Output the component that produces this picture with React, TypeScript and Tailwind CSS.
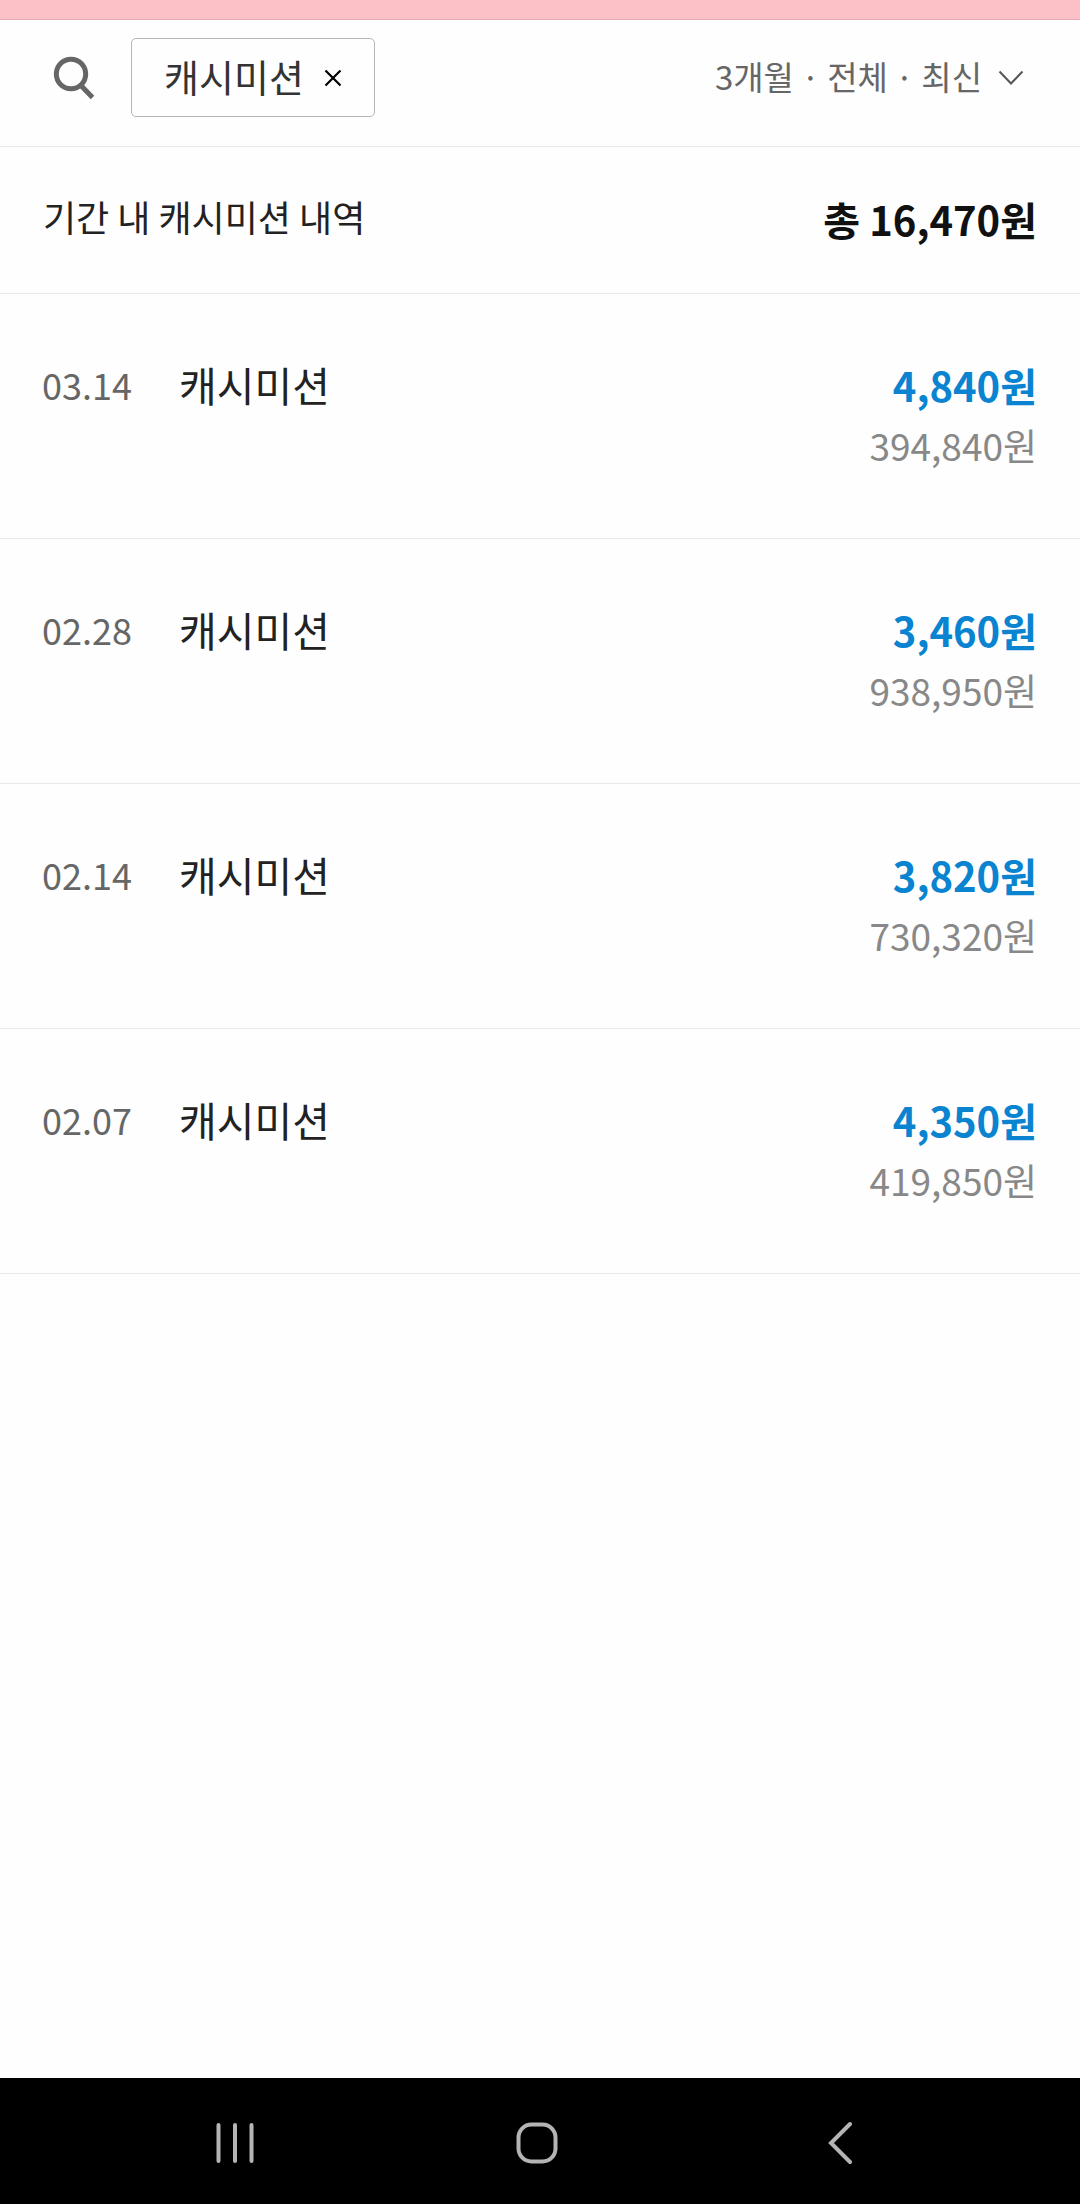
/* ── CashMissionHistory – filter bar, period total, entries ── */

import { useState } from 'react';

interface Entry {
  date: string;
  title: string;
  amount: string;
  balance: string;
}

const entries: Entry[] = [
  { date: '03.14', title: '캐시미션', amount: '4,840원', balance: '394,840원' },
  { date: '02.28', title: '캐시미션', amount: '3,460원', balance: '938,950원' },
  { date: '02.14', title: '캐시미션', amount: '3,820원', balance: '730,320원' },
  { date: '02.07', title: '캐시미션', amount: '4,350원', balance: '419,850원' },
];

function SearchIcon() {
  return (
    <svg width="42" height="44" viewBox="0 0 42 44" fill="none" stroke="#666" strokeWidth="5">
      <circle cx="18" cy="18" r="14.7" />
      <path d="M27.5 29 39.5 41.5" />
    </svg>
  );
}

function FilterBar() {
  const [keyword, setKeyword] = useState('캐시미션');

  return (
    <header className="flex h-[127px] items-start justify-between border-b border-[#e8e8e8] pt-[18px] pr-14 pl-[53px]">
      <div className="flex items-center">
        <button aria-label="검색" className="w-[78px]">
          <SearchIcon />
        </button>
        {keyword && (
          <div className="flex h-[79px] items-center gap-5 rounded-[5px] border border-[#b5b5b5] px-8 text-[38px] text-[#333]">
            <span className="pb-1">{keyword}</span>
            <button aria-label="검색어 삭제" onClick={() => setKeyword('')}>
              <svg width="18" height="18" viewBox="0 0 18 18" stroke="#000" strokeWidth="2.2">
                <path d="M1.5 1.5 16.5 16.5M16.5 1.5 1.5 16.5" />
              </svg>
            </button>
          </div>
        )}
      </div>
      <button className="flex h-[79px] items-center gap-4 text-[33px] text-[#666]">
        <span className="pb-0.5">3개월 · 전체 · 최신</span>
        <svg width="26" height="16" viewBox="0 0 26 16" fill="none" stroke="#555" strokeWidth="2">
          <path d="M1.5 1.5 13 13.5 24.5 1.5" />
        </svg>
      </button>
    </header>
  );
}

function EntryRow({ entry }: { entry: Entry }) {
  return (
    <li className="flex h-[245px] items-start border-b border-[#e8e8e8] pt-[61px] pr-[43px] pl-[42px]">
      <time className="w-[137px] text-[36px] leading-[58px] text-[#666]">{entry.date}</time>
      <p className="flex-1 text-[41px] leading-[58px] text-[#222]">{entry.title}</p>
      <div className="text-right">
        <p className="text-[40px] leading-[60px] font-bold text-[#0a84d0]">{entry.amount}</p>
        <p className="text-[37px] leading-[60px] text-[#888]">{entry.balance}</p>
      </div>
    </li>
  );
}

function SystemNav() {
  return (
    <nav className="grid h-[126px] shrink-0 grid-cols-3 items-center bg-black pt-1 pr-[90px] pl-[84px]">
      <button aria-label="최근 앱" className="flex justify-center">
        <svg width="40" height="44" viewBox="0 0 40 44" stroke="#b4b4b4" strokeWidth="4" strokeLinecap="round">
          <path d="M3.5 4V40M20 4V40M36.5 4V40" />
        </svg>
      </button>
      <button aria-label="홈" className="flex justify-center">
        <svg width="44" height="44" viewBox="0 0 44 44" fill="none" stroke="#b4b4b4" strokeWidth="4">
          <rect x="3.5" y="3.5" width="37" height="37" rx="13" />
        </svg>
      </button>
      <button aria-label="뒤로" className="flex justify-center">
        <svg width="26" height="44" viewBox="0 0 26 44" fill="none" stroke="#b4b4b4" strokeWidth="4" strokeLinecap="round">
          <path d="M24 3 5 22 24 41" />
        </svg>
      </button>
    </nav>
  );
}

export default function App() {
  return (
    <div className="flex min-h-screen flex-col bg-[#fefefe] font-['Noto_Sans_CJK_KR',sans-serif]">
      <div className="h-5 shrink-0 border-b border-[#e6a9b3] bg-[#fcc0c7]" />
      <FilterBar />
      <main className="flex-1">
        <section className="flex h-[147px] items-start justify-between border-b border-[#e8e8e8] px-[43px] pt-[42px]">
          <h1 className="text-[36px] leading-[54px] text-[#222]">기간 내 캐시미션 내역</h1>
          <p className="text-[40px] leading-[60px] font-bold text-[#111]">총 16,470원</p>
        </section>
        <ul>
          {entries.map((entry) => (
            <EntryRow key={entry.date} entry={entry} />
          ))}
        </ul>
      </main>
      <SystemNav />
    </div>
  );
}
